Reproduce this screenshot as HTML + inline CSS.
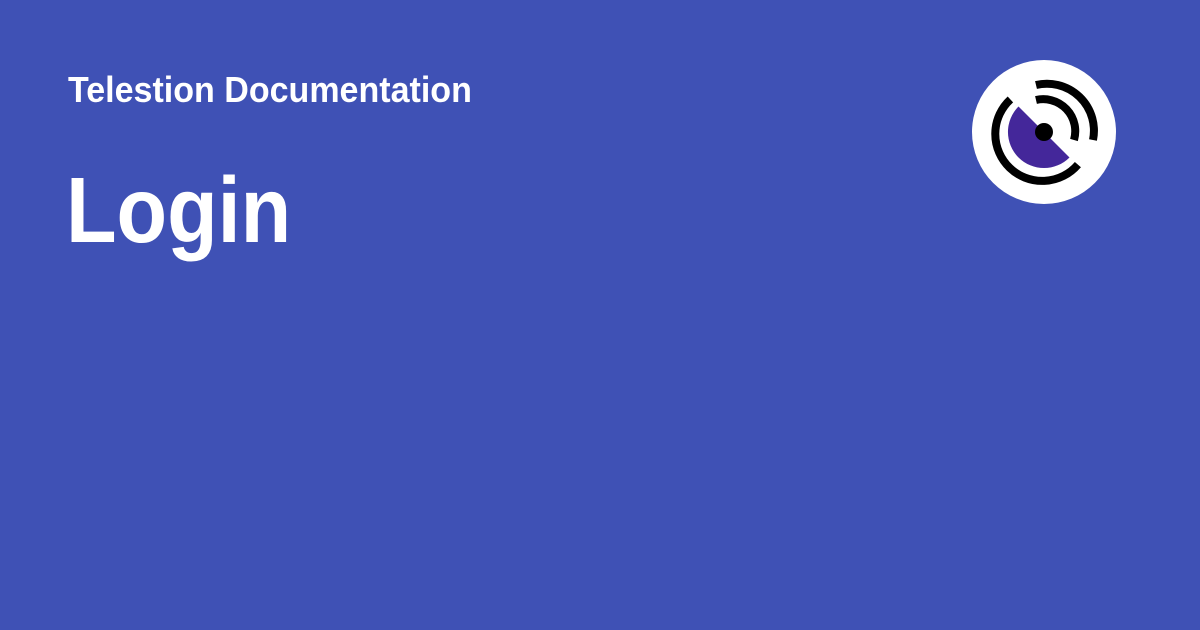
<!DOCTYPE html>
<html><head><style>
html,body{margin:0;padding:0}
body{width:1200px;height:630px;background:#3f51b5;position:relative;overflow:hidden;font-family:"Liberation Sans",sans-serif;color:#fff;font-weight:bold}
.t{position:absolute;left:68px;top:69px;font-size:36px;line-height:42px;white-space:nowrap;transform:scaleX(0.945);transform-origin:0 0}
.l{position:absolute;left:66px;top:160px;font-size:93px;line-height:100px;white-space:nowrap;transform:scaleX(0.89);transform-origin:0 0}
svg{position:absolute;left:0;top:0}
</style></head><body>
<div class="t">Telestion Documentation</div>
<div class="l">Login</div>
<svg width="1200" height="630">
<circle cx="1044" cy="132" r="72" fill="#fff"/>
<path d="M1018.5 106.5 A36 36 0 0 0 1069.5 157.5 Z" fill="#44279a"/>
<circle cx="1044" cy="132" r="9" fill="#000"/>
<g fill="none" stroke="#000" stroke-width="8">
<path d="M1010.4 99.4 A47 47 0 1 0 1077.9 164.6"/>
<path d="M1036 85 A47 47 0 0 1 1093 140"/>
<path d="M1036 100 A32 32 0 0 1 1074 140"/>
</g>
</svg>
</body></html>
